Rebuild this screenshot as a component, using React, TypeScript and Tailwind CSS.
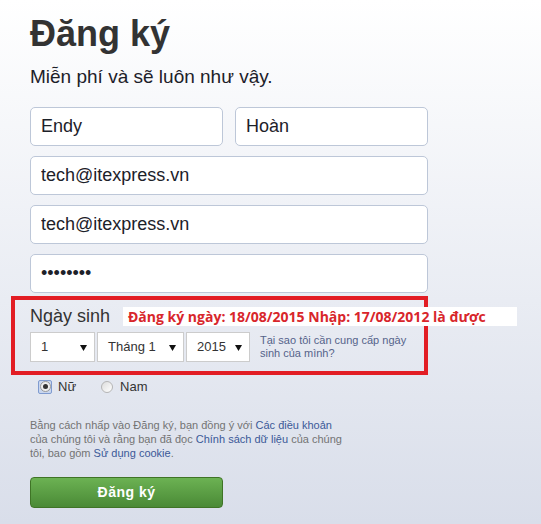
import React from "react";

// Signup form (Vietnamese) with red annotation over the birthday block
const font = { fontFamily: '"Liberation Sans", Arial, sans-serif' };

function TextBox({ value, type = "text", className = "" }: { value: string; type?: string; className?: string }) {
  return (
    <input
      type={type}
      defaultValue={value}
      readOnly
      className={`h-[39px] rounded-[5px] border border-[#bdc7d8] bg-white px-[10px] text-[18px] text-[#1d2129] outline-none ${className}`}
    />
  );
}

function FakeSelect({ label, width }: { label: string; width: string }) {
  return (
    <div className={`flex h-[30px] items-center justify-between border border-[#ccc] bg-white pl-[10px] pr-[7px] text-[13px] text-[#333] ${width}`}>
      <span>{label}</span>
      <svg width="7" height="7" viewBox="0 0 7 7">
        <path d="M0 1h7L3.5 7z" fill="#111" />
      </svg>
    </div>
  );
}

export default function App() {
  return (
    <div className="min-h-screen bg-gradient-to-b from-white to-[#d9deea] px-[30px]" style={font}>
      <div className="w-[398px]">
        <h1 className="pt-[16px] text-[36px] font-bold leading-none text-[#333]">Đăng ký</h1>
        <p className="mt-[14px] text-[19px] leading-[22px] text-[#1d2129]">Miễn phí và sẽ luôn như vậy.</p>

        {/* name + email + password */}
        <div className="mt-[19px] flex flex-col gap-[10px]">
          <div className="flex gap-[12px]">
            <TextBox value="Endy" className="w-[193px]" />
            <TextBox value="Hoàn" className="w-[193px]" />
          </div>
          <TextBox value="tech@itexpress.vn" className="w-full" />
          <TextBox value="tech@itexpress.vn" className="w-full" />
          <TextBox value="12345678" type="password" className="w-full" />
        </div>

        {/* birthday block, boxed in red */}
        <div className="mt-[3px] ml-[-19px] w-[417px] border-4 border-[#e21d24] pt-[6px] pb-[9px] pl-[15px]">
          <div className="flex items-center">
            <span className="w-[93px] shrink-0 text-[18px] leading-[21px] text-[#333]">Ngày sinh</span>
            <span
              className="w-[394px] shrink-0 whitespace-nowrap bg-white pl-[5px] text-[14px] font-bold leading-[19px] text-[#d8262b]"
              style={{ fontFamily: '"Open Sans", "Liberation Sans", sans-serif' }}
            >
              Đăng ký ngày: 18/08/2015 Nhập: 17/08/2012 là được
            </span>
          </div>
          <div className="mt-[5px] flex items-center">
            <div className="flex gap-[2px]">
              <FakeSelect label="1" width="w-[65px]" />
              <FakeSelect label="Tháng 1" width="w-[87px]" />
              <FakeSelect label="2015" width="w-[64px]" />
            </div>
            <p className="ml-[10px] text-[11px] leading-[13px] text-[#55638a]">
              Tại sao tôi cần cung cấp ngày
              <br />
              sinh của mình?
            </p>
          </div>
        </div>

        {/* gender */}
        <div className="mt-[2px] flex items-center pl-[8px] text-[13px] text-[#333]">
          <span className="flex h-[14px] w-[14px] items-center justify-center rounded-[2px] border border-[#7f9bd0] bg-[#c9d6ee]">
            <span className="flex h-[11px] w-[11px] items-center justify-center rounded-full border border-[#999] bg-[#eee]">
              <span className="h-[5px] w-[5px] rounded-full bg-[#333]" />
            </span>
          </span>
          <span className="ml-[6px]">Nữ</span>
          <span className="ml-[25px] h-[12px] w-[12px] rounded-full border border-[#b5b5b5] bg-gradient-to-br from-[#ddd] to-white" />
          <span className="ml-[7px]">Nam</span>
        </div>

        {/* terms */}
        <p className="mt-[21px] text-[11px] leading-[14px] text-[#737373]">
          Bằng cách nhấp vào Đăng ký, bạn đồng ý với <span className="text-[#3b5998]">Các điều khoản</span>
          <br />
          của chúng tôi và rằng bạn đã đọc <span className="text-[#3b5998]">Chính sách dữ liệu</span> của chúng
          <br />
          tôi, bao gồm <span className="text-[#3b5998]">Sử dụng cookie</span>.
        </p>

        <button className="mt-[17px] h-[31px] w-[193px] rounded-[4px] border border-[#3f7426] bg-gradient-to-b from-[#6cb253] to-[#4a8a36] text-[14px] font-bold tracking-[0.5px] text-white">
          Đăng ký
        </button>
      </div>
    </div>
  );
}
